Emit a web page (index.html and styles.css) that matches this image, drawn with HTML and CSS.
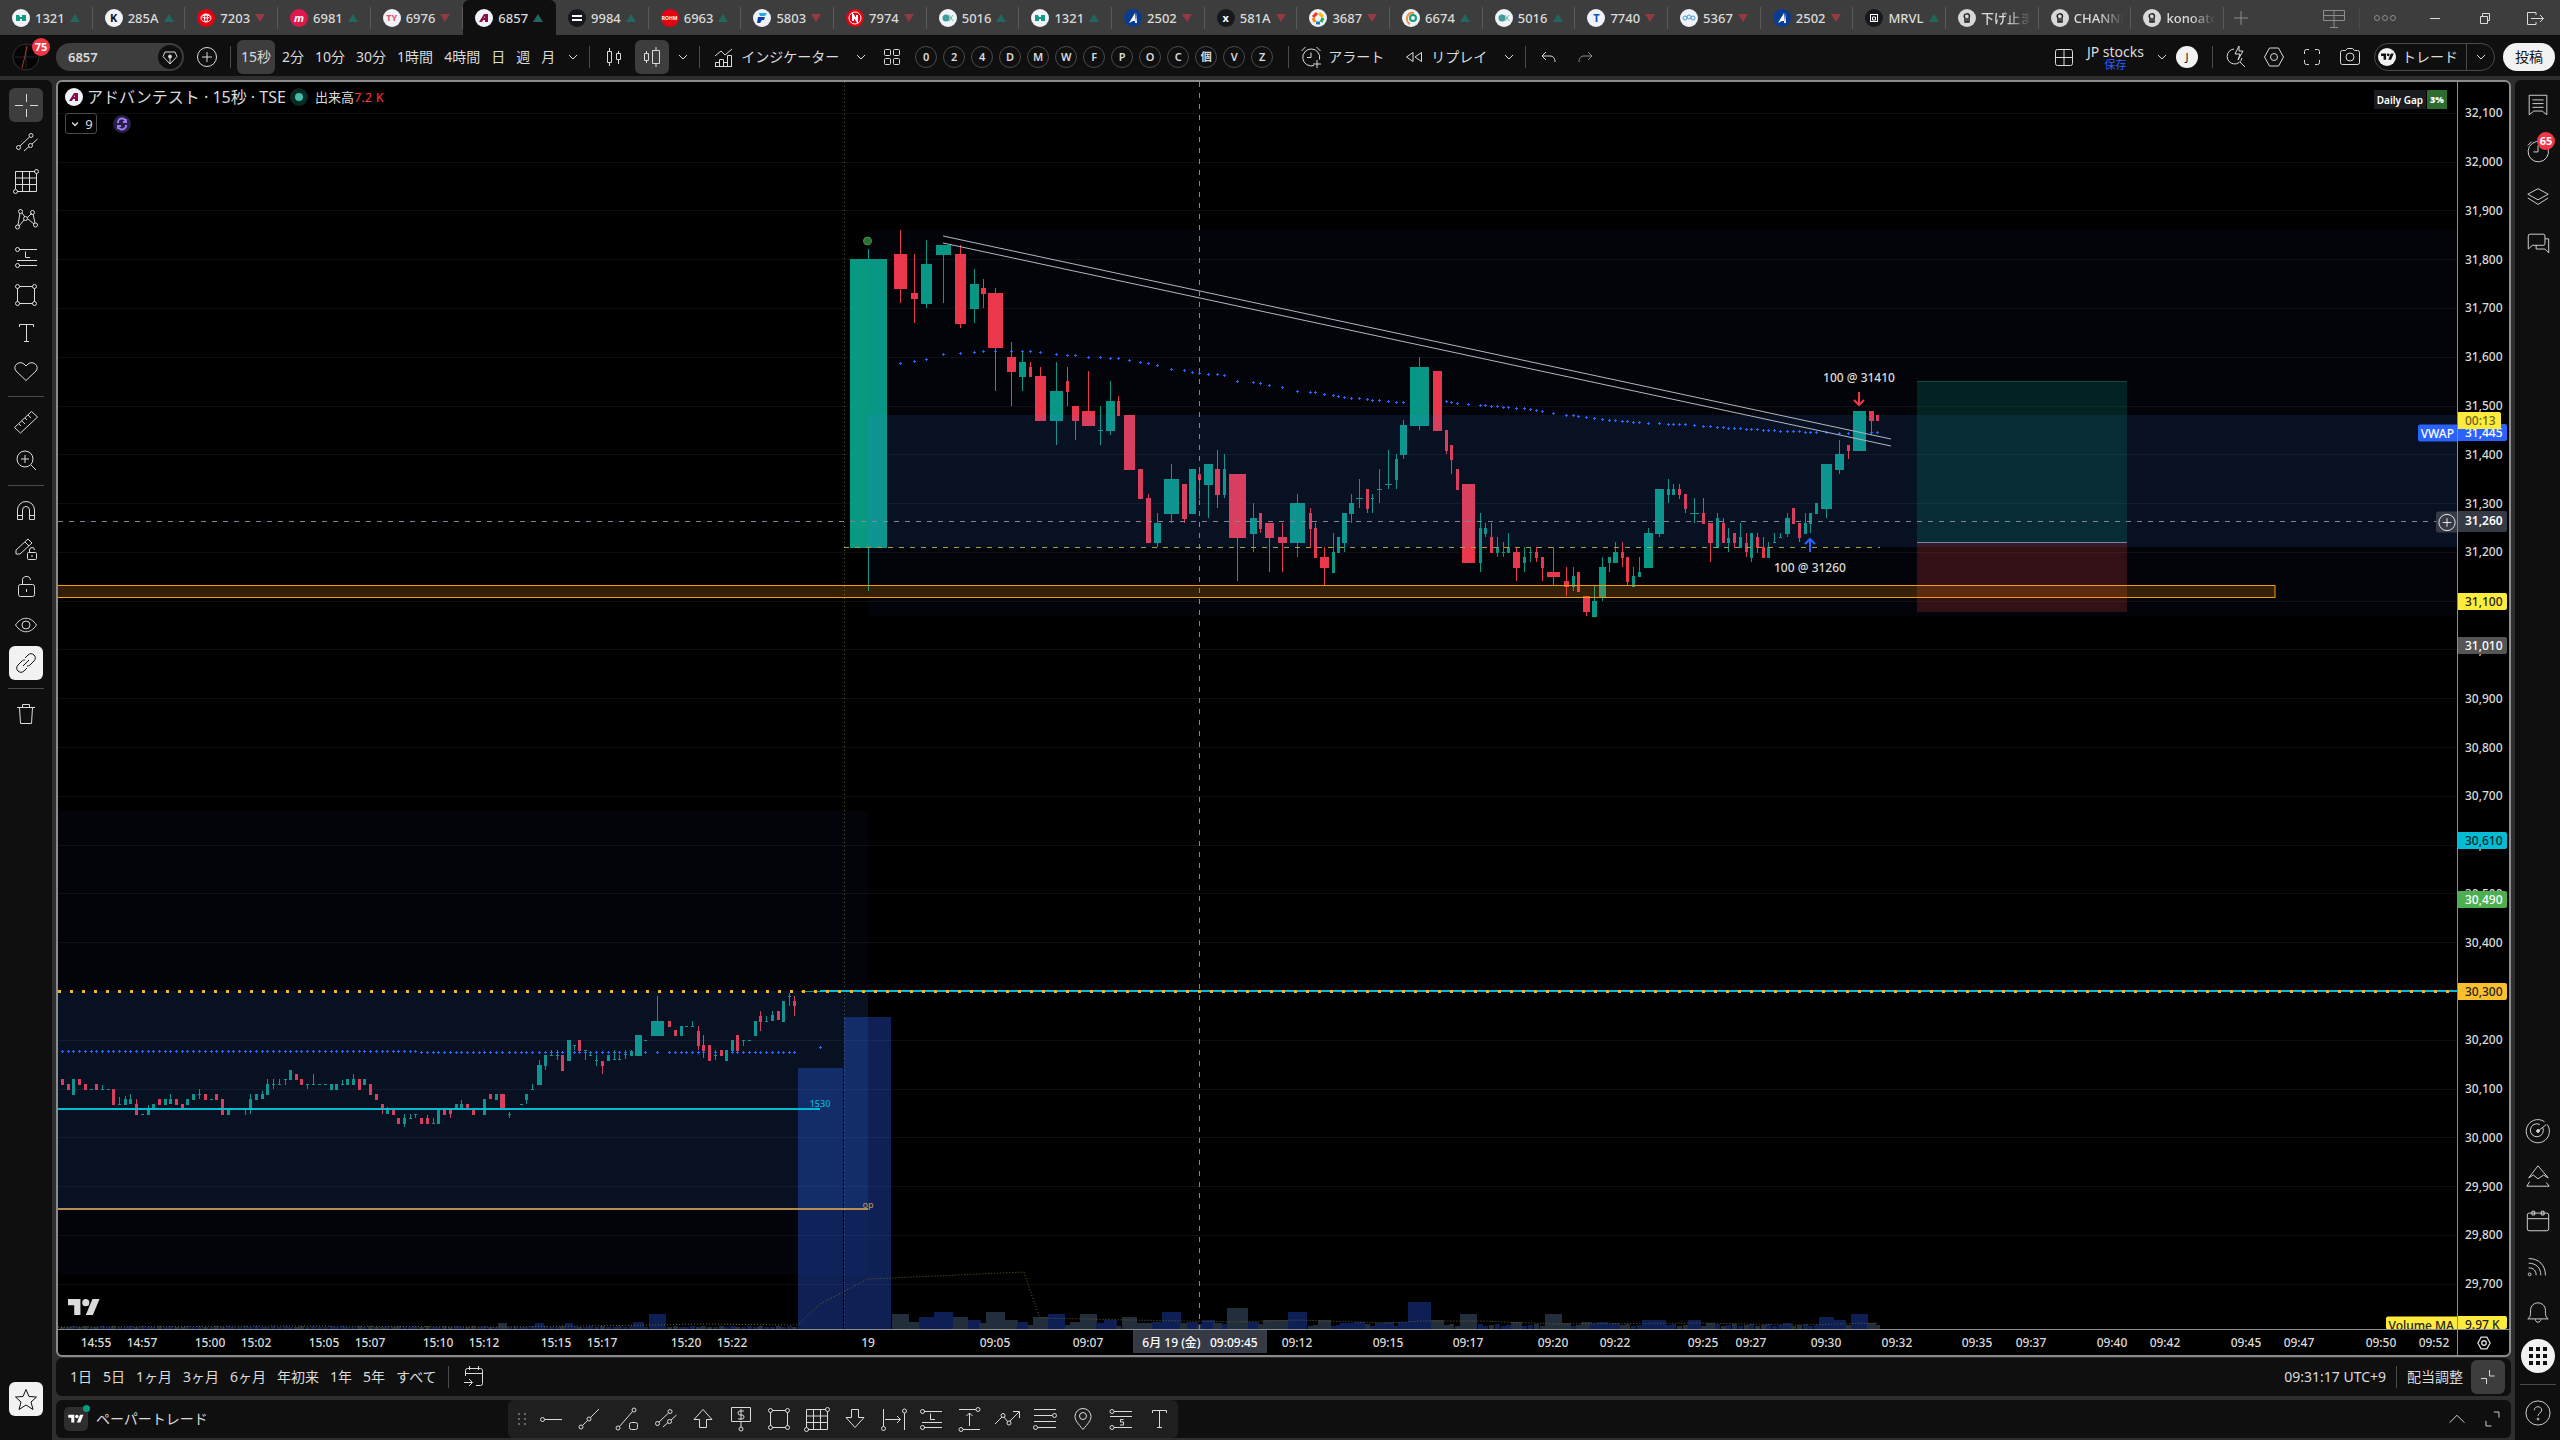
FILE: index.html
```html
<!DOCTYPE html>
<html lang="ja">
<head>
  <meta charset="UTF-8">
  <title>6857 アドバンテスト</title>
  <meta name="viewport" content="width=device-width, initial-scale=1.0">
  <link rel="stylesheet" href="styles.css">
</head>
<body>

<svg class="sprite" aria-hidden="true">
  <symbol id="i-down" viewBox="0 0 28 28"><path d="M10 12l4 4 4-4"/></symbol>
  <symbol id="i-up" viewBox="0 0 28 28"><path d="M6 18l8-8 8 8"/></symbol>
  <symbol id="i-plus" viewBox="0 0 28 28"><path d="M14 7v14M7 14h14"/></symbol>
  <symbol id="i-pluscircle" viewBox="0 0 28 28"><circle cx="14" cy="14" r="9.500"/><path d="M14 9v10M9 14h10"/></symbol>
  <symbol id="i-monitor" viewBox="0 0 28 28"><path d="M3.500 6.500h21v10h-21zM14 6v18M3.500 11.500h21M10 23.500h8"/></symbol>
  <symbol id="i-dots" viewBox="0 0 28 28"><circle cx="6" cy="14" r="2.500"/><circle cx="14" cy="14" r="2.500"/><circle cx="22" cy="14" r="2.500"/></symbol>
  <symbol id="i-min" viewBox="0 0 28 28"><path d="M9 14.500h10"/></symbol>
  <symbol id="i-restore" viewBox="0 0 28 28"><path d="M9.500 12.500h7v7h-7zM11.500 12V9.500h7v7H17"/></symbol>
  <symbol id="i-exit" viewBox="0 0 28 28"><path d="M15 11V8.500H6.500v12H15V18M10 14.500h12M19 11l3.500 3.500L19 18"/></symbol>
  <symbol id="i-gem" viewBox="0 0 28 28"><path d="M14 21l-7-7.500L9 9h10l2 4.500zM14 20v-5"/><circle cx="14" cy="13.500" r="1.500" fill="currentColor"/></symbol>
  <symbol id="i-candles" viewBox="0 0 28 28"><path d="M7.500 8.500h4v11h-4zM9.500 5v3.500M9.500 19.500V23M16.500 10.500h4v6h-4zM18.500 8v2.500M18.500 16.500V21"/></symbol>
  <symbol id="i-volcandles" viewBox="0 0 28 28"><path d="M6.500 10.500h4v7h-4zM8.500 8v2.500M8.500 17.500V20M14.500 7.500h7v13h-7zM18 4v3.500M18 20.500V24"/></symbol>
  <symbol id="i-indicator" viewBox="0 0 28 28"><path d="M5.500 23.500v-4h4v4M9.500 23.500v-7h4v7M13.500 19.500h4v4M17.500 23.500v-11h4v11zM5 23.500h17M5 13l6-5 4 4 7-6"/></symbol>
  <symbol id="i-grid4" viewBox="0 0 28 28"><rect x="6.500" y="6.500" width="6" height="6" rx="1"/><rect x="15.500" y="6.500" width="6" height="6" rx="1"/><rect x="6.500" y="15.500" width="6" height="6" rx="1"/><rect x="15.500" y="15.500" width="6" height="6" rx="1"/></symbol>
  <symbol id="i-alarm" viewBox="0 0 28 28"><path d="M17 22.500a8.500 8.500 0 1 1 5.500-6M14 9.500v5h-4M4.500 8l4-4M23.500 8l-4-4M20 17v8M16 21h8"/></symbol>
  <symbol id="i-replay" viewBox="0 0 28 28"><path d="M13 9.500v9L6.500 14zM21.500 9.500v9L15 14z"/></symbol>
  <symbol id="i-undo" viewBox="0 0 28 28"><path d="M12 9l-4 4 4 4M8 13h8c3 0 5 2 5 6"/></symbol>
  <symbol id="i-redo" viewBox="0 0 28 28"><path d="M16 9l4 4-4 4M20 13h-8c-3 0-5 2-5 6"/></symbol>
  <symbol id="i-layout" viewBox="0 0 28 28"><rect x="5.500" y="6.500" width="17" height="16" rx="2"/><path d="M14 6.500v16M14 14.500h8.500M5.500 14.500H14" /></symbol>
  <symbol id="i-quick" viewBox="0 0 28 28"><path d="M12 6a7.500 7.500 0 1 0 8 9M18 19l5 5M17 3l-4 8h5l-2 6 5-9h-4z"/></symbol>
  <symbol id="i-hex" viewBox="0 0 28 28"><path d="M9.500 5h9l5 9-5 9h-9l-5-9z"/><circle cx="14" cy="14" r="3.500"/></symbol>
  <symbol id="i-full" viewBox="0 0 28 28"><path d="M6.500 11V8.500a2 2 0 0 1 2-2H11M17 6.500h2.500a2 2 0 0 1 2 2V11M21.500 17v2.500a2 2 0 0 1-2 2H17M11 21.500H8.500a2 2 0 0 1-2-2V17"/></symbol>
  <symbol id="i-camera" viewBox="0 0 28 28"><path d="M4.500 9.500a2 2 0 0 1 2-2h3l2-2h5l2 2h3a2 2 0 0 1 2 2v10a2 2 0 0 1-2 2h-15a2 2 0 0 1-2-2z"/><circle cx="14" cy="14" r="4"/></symbol>
  <symbol id="i-cross" viewBox="0 0 28 28"><path d="M14.500 3v8M14.500 18v8M3 14.500h8M18 14.500h8"/></symbol>
  <symbol id="i-trend2" viewBox="0 0 28 28"><path d="M8 17l9.500-9M12 22l5-4.500M20 15l5.500-5"/><circle cx="6.500" cy="18.500" r="2"/><circle cx="19" cy="6.500" r="2"/><circle cx="18.500" cy="16.500" r="2"/></symbol>
  <symbol id="i-fib" viewBox="0 0 28 28"><path d="M3.500 22V4.500H23M5 24.500h19.500V6.500M3.500 11h21M3.500 17.500h21M10.500 4.500v20M17.500 4.500v20"/><circle cx="24.500" cy="4.500" r="2"/><circle cx="3.500" cy="24.500" r="2"/></symbol>
  <symbol id="i-pattern" viewBox="0 0 28 28"><path d="M6 20L8 8M10 8l3 4M15 13l5-5M21 9l2 9M7 21l5-6M16 14l6 5"/><circle cx="5.500" cy="22" r="2"/><circle cx="8.500" cy="6.500" r="2"/><circle cx="13.500" cy="13.500" r="2"/><circle cx="20.500" cy="7.500" r="2"/><circle cx="23.500" cy="20" r="2"/></symbol>
  <symbol id="i-long" viewBox="0 0 28 28"><path d="M7 6.500h18M5 17.500h20M7 22.500h18M13.500 8.500v6H18"/><circle cx="5.500" cy="6.500" r="2"/><circle cx="5.500" cy="22.500" r="2"/></symbol>
  <symbol id="i-rect" viewBox="0 0 28 28"><path d="M7.500 5.500h13M7.500 22.500h13M5.500 7.500v13M22.500 7.500v13"/><circle cx="5.500" cy="5.500" r="2"/><circle cx="22.500" cy="5.500" r="2"/><circle cx="5.500" cy="22.500" r="2"/><circle cx="22.500" cy="22.500" r="2"/></symbol>
  <symbol id="i-text" viewBox="0 0 28 28"><path d="M7.500 8V5.500h14V8M14.500 5.500v17M12 22.500h5"/></symbol>
  <symbol id="i-heart" viewBox="0 0 28 28"><path d="M14 23.500L4 14c-4-5 3-11 8-7l2 2 2-2c5-4 12 2 8 7z"/></symbol>
  <symbol id="i-ruler" viewBox="0 0 28 28"><path d="M2.500 19.500l17-16 6 5.500-17 16zM7 16l2 2M10 13l3 3M13 10l2 2M16 7l3 3"/></symbol>
  <symbol id="i-zoom" viewBox="0 0 28 28"><circle cx="13" cy="13" r="8"/><path d="M13 9v8M9 13h8M19 19l5 5"/></symbol>
  <symbol id="i-magnet" viewBox="0 0 28 28"><path d="M5.500 22.500V13a8.500 8.500 0 0 1 17 0v9.500h-5V13a3.500 3.500 0 0 0-7 0v9.500zM5.500 18.500h5M17.500 18.500h5"/></symbol>
  <symbol id="i-pencil" viewBox="0 0 28 28"><path d="M4 19v-4L16 4l4 4L8 19zM13 7l4 4"/><rect x="15.500" y="17.500" width="9" height="7" rx="1"/><path d="M17.500 17v-2a2.500 2.500 0 0 1 5 0M20 20v2"/></symbol>
  <symbol id="i-lock" viewBox="0 0 28 28"><rect x="6.500" y="11.500" width="16" height="12" rx="2"/><path d="M10.500 11V8a4 4 0 0 1 8-1M14.500 16v3" /></symbol>
  <symbol id="i-eye" viewBox="0 0 28 28"><path d="M3.500 14c6-9 15-9 21 0-6 9-15 9-21 0z"/><circle cx="14" cy="14" r="4"/></symbol>
  <symbol id="i-link" viewBox="0 0 28 28"><path d="M13 9l3-3c4-4 10 2 6 6l-4 4c-1 1-2 1-3 1M15 19l-3 3c-4 4-10-2-6-6l4-4c1-1 2-1 3-1M11 17l6-6"/></symbol>
  <symbol id="i-trash" viewBox="0 0 28 28"><path d="M5 7.500h18M7.500 7.500l1 16h11l1-16M10.500 7V4.500h7V7"/></symbol>
  <symbol id="i-star" viewBox="0 0 28 28"><path d="M14 4.500l3 7 7.500.5-5.500 5 2 7.500-7-4.500-7 4.500 2-7.500-5.500-5 7.500-.5z"/></symbol>
  <symbol id="i-list" viewBox="0 0 28 28"><path d="M4.500 3.500h19v21l-5-4h-9l-5 4zM8 8.500h12M8 12.500h12M8 16.500h12"/></symbol>
  <symbol id="i-clock" viewBox="0 0 28 28"><path d="M25 12a11 11 0 1 1-8-8M14 8v7H9M3 8l4-4"/></symbol>
  <symbol id="i-layers" viewBox="0 0 28 28"><path d="M14 5l11 6-11 6-11-6zM3 15l11 7 11-7"/></symbol>
  <symbol id="i-chat" viewBox="0 0 28 28"><path d="M5.500 4.500h14a2 2 0 0 1 2 2v8a2 2 0 0 1-2 2H8l-4.500 4v-14a2 2 0 0 1 2-2zM21.500 9.500h4v15l-4-4H12v-4"/></symbol>
  <symbol id="i-radar" viewBox="0 0 28 28"><path d="M24 7a12.500 12.500 0 1 1-3-3M19 10a7 7 0 1 1-3-3M14 14l9-7"/><circle cx="14" cy="14" r="1.500" fill="currentColor"/></symbol>
  <symbol id="i-pyramid" viewBox="0 0 28 28"><path d="M14 3l11 13-5-3-6 4-5-4-5 3zM2 25h24l-3-4M5 20l-3 5"/></symbol>
  <symbol id="i-calendar" viewBox="0 0 28 28"><rect x="2.500" y="5.500" width="23" height="19" rx="2"/><path d="M3 11.500h22M7.500 3.500h3v4h-3zM17.500 3.500h3v4h-3z"/></symbol>
  <symbol id="i-rss" viewBox="0 0 28 28"><circle cx="5" cy="23" r="1.500"/><path d="M4 16c5 0 8 3 8 8M4 11c8 0 13 5 13 13M4 6c11 0 18 7 18 18"/></symbol>
  <symbol id="i-bell" viewBox="0 0 28 28"><path d="M3 22.500c3-2 3-4 3-9 0-11 16-11 16 0 0 5 0 7 3 9zM11 23c0 4 6 4 6 0"/></symbol>
  <symbol id="i-help" viewBox="0 0 28 28"><circle cx="14" cy="14" r="13"/><path d="M10 11c0-5 8-5 8 0 0 3-4 3-4 6"/><circle cx="14" cy="20.500" r="1"/></symbol>
  <symbol id="i-goto" viewBox="0 0 28 28"><path d="M5.500 13V7.500a2 2 0 0 1 2-2h13a2 2 0 0 1 2 2v13a2 2 0 0 1-2 2H16M5.500 10.500h17M9.500 3v4M18.500 3v4M4 19.500h8M9 16l3.500 3.500L9 23"/></symbol>
  <symbol id="i-collapse" viewBox="0 0 28 28"><path d="M15.500 7v6h5M7 15.500h5.500V21"/></symbol>
  <symbol id="i-expand" viewBox="0 0 28 28"><path d="M16 6.500h5.500v6M7.500 16v5.500h6"/></symbol>
  <symbol id="i-drag" viewBox="0 0 28 28"><path class="drag" d="M10 9h2M16 9h2M10 14h2M16 14h2M10 19h2M16 19h2"/></symbol>
  <symbol id="i-hray" viewBox="0 0 28 28"><circle cx="5.500" cy="14.500" r="2"/><path d="M8 14.500h17"/></symbol>
  <symbol id="i-trend" viewBox="0 0 28 28"><circle cx="6" cy="22" r="2"/><circle cx="14" cy="14" r="2"/><path d="M7.500 20.500l5-5M15.500 12.500L24 4"/></symbol>
  <symbol id="i-trendlock" viewBox="0 0 28 28"><circle cx="5" cy="23" r="2"/><circle cx="21" cy="5" r="2"/><path d="M6.500 21.500L19.500 6.500"/><rect x="16.500" y="17.500" width="8" height="7" rx="2"/></symbol>
  <symbol id="i-arrowup" viewBox="0 0 28 28"><path d="M14 4.500l9 10h-5.500v8h-7v-8H5z"/></symbol>
  <symbol id="i-arrowdown" viewBox="0 0 28 28"><path d="M14 22.500l9-10h-5.500v-8h-7v8H5z"/></symbol>
  <symbol id="i-price" viewBox="0 0 28 28"><path d="M4.500 2.500h19v14h-19zM14 17v5M17 6h-4a1.500 1.500 0 0 0 0 4h2a1.500 1.500 0 0 1 0 4h-4M14 4v11"/><circle cx="14" cy="24" r="2"/></symbol>
  <symbol id="i-daterange" viewBox="0 0 28 28"><path d="M4.500 4v17M25.500 8v17M6 14.500h15M18 11l3.500 3.500L18 18"/><circle cx="4.500" cy="23.500" r="2"/><circle cx="25.500" cy="6" r="2"/></symbol>
  <symbol id="i-pricerange" viewBox="0 0 28 28"><path d="M4 4.500h17M8 24.500h17M14.500 21V8M11.500 11l3-3 3 3"/><circle cx="23" cy="4.500" r="2"/><circle cx="6" cy="24.500" r="2"/></symbol>
  <symbol id="i-zig" viewBox="0 0 28 28"><path d="M2 19l7-7M11 12l4 5M17 16l9-9M20 6.500h6.500V13"/><circle cx="10" cy="10.500" r="2"/><circle cx="16" cy="18" r="2"/></symbol>
  <symbol id="i-channel" viewBox="0 0 28 28"><path d="M3 4.500h22M3 10.500h18M3 16.500h22M7 22.500h18"/><circle cx="23.500" cy="10.500" r="2"/><circle cx="4.500" cy="22.500" r="2"/></symbol>
  <symbol id="i-pin" viewBox="0 0 28 28"><path d="M14 24.500c-5-6-8-9-8-13a8 8 0 0 1 16 0c0 4-3 7-8 13z"/><circle cx="14" cy="11" r="3.500"/></symbol>
  <symbol id="i-short" viewBox="0 0 28 28"><path d="M7 6.500h18M3 11.500h22M7 22.500h18M16.500 14.500h-3v2.500h3v3h-3.500"/><circle cx="5" cy="6.500" r="2"/><circle cx="5" cy="22.500" r="2"/></symbol>
  <symbol id="l-tv" viewBox="0 0 36 28"><path fill="currentColor" stroke="none" d="M14 22H7V11H0V4h14zM28 22h-8l7.500-18h8z"/><circle cx="20" cy="8" r="4" fill="currentColor" stroke="none"/></symbol>
  <symbol id="l-lamp" viewBox="0 0 18 18"><path fill="none" stroke="#222" stroke-width="1.500" d="M7 13V9C3 4 14 3 11 9v4zM9 9v4"/></symbol>
  <symbol id="l-a" viewBox="0 0 18 18"><path fill="currentColor" stroke="none" d="M4 13l5-8h4v8h-3v-2H8l-1 2zM9 9h1V7z"/></symbol>
  <symbol id="l-bars" viewBox="0 0 18 18"><path fill="currentColor" stroke="none" d="M4 6h10v2H4zM4 10h10v2H4z"/></symbol>
  <symbol id="l-h" viewBox="0 0 18 18"><path fill="currentColor" stroke="none" d="M4 6h3l1 2h2V6h4v6h-4v-2H8v2H4z"/></symbol>
  <symbol id="l-toyota" viewBox="0 0 18 18"><g fill="none" stroke="#fff"><ellipse cx="9" cy="9" rx="5" ry="4"/><ellipse cx="9" cy="7.500" rx="4" ry="1.500"/><ellipse cx="9" cy="9" rx="1.500" ry="4"/></g></symbol>
  <symbol id="l-nin" viewBox="0 0 18 18"><circle cx="9" cy="9" r="6" fill="none" stroke="#fff"/><path fill="none" stroke="#fff" stroke-width="2" d="M7 12V6l4 6V6"/></symbol>
  <symbol id="l-f" viewBox="0 0 18 18"><path fill="#1fa9e8" stroke="none" d="M6 4h8l-2 3H7z"/><path fill="#0b3fb0" stroke="none" d="M5 8h7l-1 3H9l-2 3H4z"/></symbol>
  <symbol id="l-dots" viewBox="0 0 18 18"><circle cx="7" cy="9" r="3.500" fill="#3f9c9a" stroke="none"/><path stroke="#6cc0a0" fill="none" d="M10 6l4 6M14 6l-4 6"/></symbol>
  <symbol id="l-sail" viewBox="0 0 18 18"><path fill="#fff" stroke="none" d="M5 14l6-10v8H9zM12 3l1 11h-2z"/></symbol>
  <symbol id="l-star" viewBox="0 0 18 18"><g fill="none" stroke-width="3"><path stroke="#e33" d="M4 8l4-4"/><path stroke="#fb0" d="M10 4l4 4"/><path stroke="#2a5" d="M14 9l-2 4"/><path stroke="#27c" d="M11 14H7"/><path stroke="#f80" d="M6 13L4 9"/></g></symbol>
  <symbol id="l-gs" viewBox="0 0 18 18"><path fill="none" stroke="#f0913a" stroke-width="2" d="M12 4C4 2 3 13 8 15"/><circle cx="11" cy="9" r="3" fill="none" stroke="#159c7a" stroke-width="2"/></symbol>
  <symbol id="l-ring" viewBox="0 0 18 18"><g fill="none" stroke="#4b9bd8"><circle cx="5" cy="9" r="2"/><circle cx="9" cy="8" r="2"/><circle cx="13" cy="9" r="2"/></g></symbol>
  <symbol id="l-mrvl" viewBox="0 0 18 18"><path fill="none" stroke="#fff" d="M5.500 5v8M12.500 5v8M5 5.500h8M5 12.500h8M7.500 8h3v3h-3z"/></symbol>
</svg>

<nav class="tabs">
  <div class="tab-list">
    <a href="#" class="tab"><span class="logo green"><svg><use href="#l-h"/></svg></span>1321<i class="up"></i></a>
    <a href="#" class="tab"><span class="logo">K</span>285A<i class="up"></i></a>
    <a href="#" class="tab"><span class="logo red"><svg><use href="#l-toyota"/></svg></span>7203<i class="dn"></i></a>
    <a href="#" class="tab"><span class="logo pink">m</span>6981<i class="up"></i></a>
    <a href="#" class="tab"><span class="logo ty">TY</span>6976<i class="dn"></i></a>
    <a href="#" class="tab active"><span class="logo wine"><svg><use href="#l-a"/></svg></span>6857<i class="up"></i></a>
    <a href="#" class="tab"><span class="logo dark"><svg><use href="#l-bars"/></svg></span>9984<i class="up"></i></a>
    <a href="#" class="tab"><span class="logo red tiny">ROHM</span>6963<i class="up"></i></a>
    <a href="#" class="tab"><span class="logo"><svg><use href="#l-f"/></svg></span>5803<i class="dn"></i></a>
    <a href="#" class="tab"><span class="logo red"><svg><use href="#l-nin"/></svg></span>7974<i class="dn"></i></a>
    <a href="#" class="tab"><span class="logo"><svg><use href="#l-dots"/></svg></span>5016<i class="up"></i></a>
    <a href="#" class="tab"><span class="logo green"><svg><use href="#l-h"/></svg></span>1321<i class="up"></i></a>
    <a href="#" class="tab"><span class="logo navy"><svg><use href="#l-sail"/></svg></span>2502<i class="dn"></i></a>
    <a href="#" class="tab"><span class="logo dark">x</span>581A<i class="dn"></i></a>
    <a href="#" class="tab"><span class="logo"><svg><use href="#l-star"/></svg></span>3687<i class="dn"></i></a>
    <a href="#" class="tab"><span class="logo"><svg><use href="#l-gs"/></svg></span>6674<i class="up"></i></a>
    <a href="#" class="tab"><span class="logo"><svg><use href="#l-dots"/></svg></span>5016<i class="up"></i></a>
    <a href="#" class="tab"><span class="logo blue">T</span>7740<i class="dn"></i></a>
    <a href="#" class="tab"><span class="logo"><svg><use href="#l-ring"/></svg></span>5367<i class="dn"></i></a>
    <a href="#" class="tab"><span class="logo navy"><svg><use href="#l-sail"/></svg></span>2502<i class="dn"></i></a>
    <a href="#" class="tab"><span class="logo dark"><svg><use href="#l-mrvl"/></svg></span>MRVL<i class="up"></i></a>
    <a href="#" class="tab"><span class="logo grey"><svg><use href="#l-lamp"/></svg></span><span class="fade">下げ止ま</span></a>
    <a href="#" class="tab"><span class="logo grey"><svg><use href="#l-lamp"/></svg></span><span class="fade">CHANNE</span></a>
    <a href="#" class="tab"><span class="logo grey"><svg><use href="#l-lamp"/></svg></span><span class="fade">konoato</span></a>
  </div>
  <div class="window-tools">
    <button class="muted w35" aria-label="新しいタブ"><svg class="ico"><use href="#i-plus"/></svg></button>
    <button class="muted monitor" aria-label="モニター"><svg class="ico"><use href="#i-monitor"/></svg></button>
    <span class="sep"></span>
    <button class="muted w50" aria-label="メニュー"><svg class="ico"><use href="#i-dots"/></svg></button>
    <button class="w50" aria-label="最小化"><svg class="ico"><use href="#i-min"/></svg></button>
    <button class="w50" aria-label="元に戻す"><svg class="ico"><use href="#i-restore"/></svg></button>
    <button class="w50" aria-label="終了"><svg class="ico"><use href="#i-exit"/></svg></button>
  </div>
</nav>

<header class="toolbar">
  <button class="user" aria-label="ユーザー"><svg class="avatar" viewBox="0 0 28 28"><circle cx="14" cy="14" r="13" fill="#050505" stroke="#333"/><path d="M3 14h22M14 2v24" stroke="#1d2433"/><path d="M10 25l3-12 2-10" stroke="#a04020" fill="none"/></svg><b class="badge">75</b></button>
  <div class="search"><input type="text" value="6857" aria-label="シンボル検索"><span class="gem"><svg class="ico"><use href="#i-gem"/></svg></span></div>
  <button class="w35 add" aria-label="比較"><svg class="ico"><use href="#i-pluscircle"/></svg></button>
  <span class="sep"></span>
  <div class="intervals">
    <button class="on">15秒</button><button>2分</button><button>10分</button><button>30分</button><button>1時間</button><button>4時間</button><button>日</button><button>週</button><button>月</button>
  </div>
  <button class="chev" aria-label="時間足"><svg class="ico"><use href="#i-down"/></svg></button>
  <span class="sep"></span>
  <button class="w35" aria-label="ローソク足"><svg class="ico"><use href="#i-candles"/></svg></button>
  <button class="w35 on" aria-label="出来高ローソク足"><svg class="ico"><use href="#i-volcandles"/></svg></button>
  <button class="chev" aria-label="チャートタイプ"><svg class="ico"><use href="#i-down"/></svg></button>
  <span class="sep"></span>
  <button class="labelled"><svg class="ico"><use href="#i-indicator"/></svg>インジケーター</button>
  <button class="chev wide" aria-label="お気に入り"><svg class="ico"><use href="#i-down"/></svg></button>
  <button class="w35" aria-label="テンプレート"><svg class="ico"><use href="#i-grid4"/></svg></button>
  <div class="rounds"><button>0</button><button>2</button><button>4</button><button>D</button><button>M</button><button>W</button><button>F</button><button>P</button><button>O</button><button>C</button><button>個</button><button>V</button><button>Z</button></div>
  <span class="sep far"></span>
  <button class="labelled"><svg class="ico"><use href="#i-alarm"/></svg>アラート</button>
  <button class="labelled replay"><svg class="ico"><use href="#i-replay"/></svg>リプレイ</button>
  <button class="chev wide" aria-label="リプレイ設定"><svg class="ico"><use href="#i-down"/></svg></button>
  <span class="sep tight"></span>
  <button class="w38" aria-label="元に戻す"><svg class="ico"><use href="#i-undo"/></svg></button>
  <button class="w38 muted" aria-label="やり直し"><svg class="ico"><use href="#i-redo"/></svg></button>

  <div class="right">
    <button class="w38" aria-label="レイアウト"><svg class="ico"><use href="#i-layout"/></svg></button>
    <button class="saved">JP stocks<small>保存</small></button>
    <button class="chev" aria-label="レイアウト一覧"><svg class="ico"><use href="#i-down"/></svg></button>
    <button class="jay">J</button>
    <span class="sep"></span>
    <button class="w38" aria-label="クイック検索"><svg class="ico"><use href="#i-quick"/></svg></button>
    <button class="w38" aria-label="設定"><svg class="ico"><use href="#i-hex"/></svg></button>
    <button class="w38" aria-label="全画面"><svg class="ico"><use href="#i-full"/></svg></button>
    <button class="w38" aria-label="スナップショット"><svg class="ico"><use href="#i-camera"/></svg></button>
    <div class="trade"><button><span class="tv"><svg><use href="#l-tv"/></svg></span>トレード</button><button class="drop" aria-label="トレードメニュー"><svg class="ico"><use href="#i-down"/></svg></button></div>
    <button class="post">投稿</button>
  </div>
</header>

<div class="workspace">
  <aside class="tools">
    <button class="on" aria-label="十字"><svg class="ico"><use href="#i-cross"/></svg></button>
    <button aria-label="トレンドライン"><svg class="ico"><use href="#i-trend2"/></svg></button>
    <button aria-label="フィボナッチ"><svg class="ico"><use href="#i-fib"/></svg></button>
    <button aria-label="パターン"><svg class="ico"><use href="#i-pattern"/></svg></button>
    <button aria-label="ポジション"><svg class="ico"><use href="#i-long"/></svg></button>
    <button aria-label="図形"><svg class="ico"><use href="#i-rect"/></svg></button>
    <button aria-label="テキスト"><svg class="ico"><use href="#i-text"/></svg></button>
    <button aria-label="アイコン"><svg class="ico"><use href="#i-heart"/></svg></button>
    <hr>
    <button aria-label="ものさし"><svg class="ico"><use href="#i-ruler"/></svg></button>
    <button aria-label="拡大"><svg class="ico"><use href="#i-zoom"/></svg></button>
    <hr>
    <button aria-label="マグネット"><svg class="ico"><use href="#i-magnet"/></svg></button>
    <button aria-label="描画モード"><svg class="ico"><use href="#i-pencil"/></svg></button>
    <button aria-label="ロック"><svg class="ico"><use href="#i-lock"/></svg></button>
    <button aria-label="表示"><svg class="ico"><use href="#i-eye"/></svg></button>
    <button class="white" aria-label="同期"><svg class="ico"><use href="#i-link"/></svg></button>
    <hr>
    <button aria-label="削除"><svg class="ico"><use href="#i-trash"/></svg></button>
    <button class="white last" aria-label="お気に入りツールバー"><svg class="ico"><use href="#i-star"/></svg></button>
  </aside>

  <main class="center">
    <section class="chart">
      <div class="pane">
        <svg id="plot" viewBox="58 82 2399 1247" preserveAspectRatio="none"></svg>
        <div class="legend">
          <div class="symbol"><span class="logo wine"><svg><use href="#l-a"/></svg></span><h1>アドバンテスト · 15秒 · TSE</h1><span class="live"></span><span class="vol">出来高<em>7.2 K</em></span></div>
          <div class="studies"><button><svg class="ico"><use href="#i-down"/></svg>9</button><span class="sync"><svg viewBox="0 0 18 18"><path d="M5 8a4 4 0 0 1 8-1M13 10a4 4 0 0 1-8 1M13 4v3h-3M5 14v-3h3" fill="none" stroke="#9f7bf0" stroke-width="2"/></svg></span></div>
        </div>
        <div class="gap-table"><span>Daily Gap</span><b>3%</b></div>
        <svg class="mark"><use href="#l-tv"/></svg>
        <div id="notes"></div>
      </div>
      <div class="price-axis" id="prices"></div>
      <div class="time-axis" id="times"></div>
      <button class="axis-gear" aria-label="軸の設定"><svg class="ico"><use href="#i-hex"/></svg></button>
    </section>

    <section class="ranges">
      <button>1日</button><button>5日</button><button>1ヶ月</button><button>3ヶ月</button><button>6ヶ月</button><button>年初来</button><button>1年</button><button>5年</button><button>すべて</button>
      <span class="sep"></span>
      <button aria-label="日付へ移動"><svg class="ico"><use href="#i-goto"/></svg></button>
      <div class="right"><button>09:31:17 UTC+9</button><span class="sep"></span><button>配当調整</button><button class="on" aria-label="縮小"><svg class="ico"><use href="#i-collapse"/></svg></button></div>
    </section>

    <section class="bottom">
      <button class="paper"><span class="tvbox"><svg><use href="#l-tv"/></svg></span>ペーパートレード</button>
      <div class="palette">
        <span class="grip"><svg class="ico"><use href="#i-drag"/></svg></span>
        <button aria-label="水平レイ"><svg class="ico"><use href="#i-hray"/></svg></button>
        <button aria-label="レイ"><svg class="ico"><use href="#i-trend"/></svg></button>
        <button aria-label="情報ライン"><svg class="ico"><use href="#i-trendlock"/></svg></button>
        <button aria-label="平行チャネル"><svg class="ico"><use href="#i-trend2"/></svg></button>
        <button aria-label="上矢印"><svg class="ico"><use href="#i-arrowup"/></svg></button>
        <button aria-label="価格ラベル"><svg class="ico"><use href="#i-price"/></svg></button>
        <button aria-label="長方形"><svg class="ico"><use href="#i-rect"/></svg></button>
        <button aria-label="グリッド"><svg class="ico"><use href="#i-fib"/></svg></button>
        <button aria-label="下矢印"><svg class="ico"><use href="#i-arrowdown"/></svg></button>
        <button aria-label="日付範囲"><svg class="ico"><use href="#i-daterange"/></svg></button>
        <button aria-label="ロング"><svg class="ico"><use href="#i-long"/></svg></button>
        <button aria-label="価格範囲"><svg class="ico"><use href="#i-pricerange"/></svg></button>
        <button aria-label="パス"><svg class="ico"><use href="#i-zig"/></svg></button>
        <button aria-label="リトレースメント"><svg class="ico"><use href="#i-channel"/></svg></button>
        <button aria-label="ピン"><svg class="ico"><use href="#i-pin"/></svg></button>
        <button aria-label="ショート"><svg class="ico"><use href="#i-short"/></svg></button>
        <button aria-label="文字"><svg class="ico"><use href="#i-text"/></svg></button>
      </div>
      <div class="right"><button aria-label="開く"><svg class="ico"><use href="#i-up"/></svg></button><button aria-label="最大化"><svg class="ico"><use href="#i-expand"/></svg></button></div>
    </section>
  </main>

  <aside class="widgets">
    <button aria-label="ウォッチリスト"><svg class="ico"><use href="#i-list"/></svg></button>
    <button aria-label="アラート"><svg class="ico"><use href="#i-clock"/></svg><b class="badge">65</b></button>
    <button aria-label="オブジェクト"><svg class="ico"><use href="#i-layers"/></svg></button>
    <button aria-label="チャット"><svg class="ico"><use href="#i-chat"/></svg></button>
    <button class="first-low" aria-label="スクリーナー"><svg class="ico"><use href="#i-radar"/></svg></button>
    <button aria-label="Pine"><svg class="ico"><use href="#i-pyramid"/></svg></button>
    <button aria-label="カレンダー"><svg class="ico"><use href="#i-calendar"/></svg></button>
    <button aria-label="ニュース"><svg class="ico"><use href="#i-rss"/></svg></button>
    <button aria-label="通知"><svg class="ico"><use href="#i-bell"/></svg></button>
    <button aria-label="アプリ"><svg class="apps" viewBox="0 0 34 34"><circle cx="17" cy="17" r="17" fill="#f2f2f2"/><path stroke="#0f0f0f" stroke-width="4" stroke-dasharray="4 3" d="M8 10h18M8 17h18M8 24h18"/></svg></button>
    <hr>
    <button aria-label="ヘルプ"><svg class="ico"><use href="#i-help"/></svg></button>
  </aside>
</div>

<script src="chart.js"></script>
</body>
</html>
```

FILE: styles.css
```css
* { box-sizing: border-box; }
body {
  margin: 0;
  height: 100vh;
  display: flex;
  flex-direction: column;
  overflow: hidden;
  background: #2e2e2e;
  color: #dbdbdb;
  font: 14px/18px "Noto Sans", "Noto Sans CJK JP", sans-serif;
}
button {
  display: flex;
  align-items: center;
  justify-content: center;
  flex: none;
  padding: 0;
  border: 0;
  background: none;
  color: inherit;
  font: inherit;
  white-space: nowrap;
}
a { color: inherit; text-decoration: none; }
svg { display: block; }
.sprite { position: absolute; width: 0; height: 0; }
.ico {
  width: 28px;
  height: 28px;
  flex: none;
  fill: none;
  stroke: currentColor;
}
.drag { stroke: #666; stroke-width: 2; }
.muted { color: #8c8c8c; }
.on { background: #3d3d3d; border-radius: 6px; }
.white { background: #f2f2f2; color: #0f0f0f; border-radius: 6px; }
.sep { width: 1px; height: 22px; background: #4a4a4a; flex: none; }
.w35 { width: 34px; }
.w38 { width: 38px; }
.w50 { width: 50px; }
.right { display: flex; align-items: center; margin-left: auto; }
.badge {
  position: absolute;
  min-width: 18px;
  height: 18px;
  border-radius: 9px;
  background: #f23645;
  color: #fff;
  font-size: 11px;
  line-height: 18px;
  text-align: center;
}

/* tabs */
.tabs { display: flex; height: 35px; background: #3d3d3d; flex: none; }
.tab-list { display: flex; flex: 1; min-width: 0; }
.tab {
  position: relative;
  display: flex;
  align-items: center;
  flex: 1 1 0;
  min-width: 0;
  padding-left: 12px;
  font-size: 13px;
  font-weight: 500;
}
.tab::after {
  content: "";
  position: absolute;
  right: 0;
  top: 7px;
  height: 22px;
  width: 1px;
  background: #5a5a5a;
}
.tab.active { background: #0f0f0f; border-radius: 6px 6px 0 0; }
.tab.active::after { display: none; }
.logo {
  width: 18px;
  height: 18px;
  flex: none;
  margin-right: 5px;
  border-radius: 50%;
  background: #f0f3fa;
  color: #111;
  font-size: 11px;
  font-weight: 700;
  line-height: 18px;
  text-align: center;
}
.logo svg { width: 18px; height: 18px; }
.logo.green { color: #0f9a83; }
.logo.red { background: #e60012; color: #fff; }
.logo.pink { background: #e0174b; color: #fff; font-style: italic; }
.logo.ty { color: #e25563; font-size: 9px; }
.logo.wine { color: #8c0a48; }
.logo.dark { background: #15181c; color: #fff; }
.logo.tiny { font-size: 5px; }
.logo.navy { background: #0a3d91; }
.logo.blue { color: #0b57b5; }
.logo.grey { background: #d8d8d8; }
.tab i {
  margin-left: 5px;
  border: 5px solid transparent;
  border-top-width: 0;
  border-bottom: 8px solid #21695f;
}
.tab i.dn { border-width: 8px 5px 0; border-top-color: #963a42; }
.fade {
  width: 50px;
  overflow: hidden;
  white-space: nowrap;
  -webkit-mask-image: linear-gradient(90deg, #000 50%, transparent);
  mask-image: linear-gradient(90deg, #000 50%, transparent);
}
.window-tools { display: flex; align-items: center; width: 336px; }
.monitor { width: 50px; margin: 0 0 0 auto; }

/* toolbar */
.toolbar {
  display: flex;
  align-items: center;
  height: 41px;
  padding: 3px 5px 0 0;
  background: #0f0f0f;
  flex: none;
}
.toolbar > button, .intervals button, .toolbar .right > button { height: 34px; }
.user { position: relative; width: 52px; }
.avatar { width: 28px; height: 28px; }
.user .badge { left: 32px; top: -2px; }
.search {
  display: flex;
  align-items: center;
  width: 128px;
  height: 28px;
  margin-left: 4px;
  padding: 0 2px 0 12px;
  border-radius: 14px;
  background: #3d3d3d;
}
.search input {
  width: 90px;
  padding: 0;
  border: 0;
  background: none;
  color: #dbdbdb;
  font: 600 13px "Noto Sans", sans-serif;
}
.gem { width: 24px; height: 24px; border-radius: 50%; background: #0f0f0f; display: flex; align-items: center; justify-content: center; }
.add { margin: 0 6px; }
.intervals { display: flex; gap: 3px; margin-left: 6px; }
.intervals button { padding: 0 4px; }
.chev { width: 28px; }
.chev + .sep { margin: 0 7px 0 2px; }
.on + .chev + .sep { margin: 0 10px 0 2px; }
.w35 + .w35 { margin-left: 4px; }
.labelled { gap: 3px; }
.chev.wide { width: 28px; margin-left: 8px; }
.rounds { display: flex; gap: 6px; margin-left: 6px; }
.rounds button {
  width: 22px;
  height: 22px;
  border: 1px solid #4a4a4a;
  border-radius: 50%;
  font-size: 11px;
  font-weight: 600;
}
.sep.far { margin: 0 8px 0 15px; }
.replay { margin-left: 16px; }
.chev.wide + .tight.sep { margin: 0 3px 0 2px; }
.saved {
  flex-direction: column;
  margin-left: 4px;
  line-height: 14px;
}
.saved small { color: #2962ff; font-size: 11px; line-height: 11px; }
.saved + .chev { margin-left: 4px; }
.toolbar .right > .jay {
  width: 22px;
  height: 22px;
  margin-right: 14px;
  border-radius: 50%;
  background: #f2f2f2;
  color: #0f0f0f;
  font-size: 11px;
}
.right .jay + .sep { margin-right: 4px; }
.trade {
  display: flex;
  height: 28px;
  margin: 0 8px 0 5px;
  border: 1px solid #4a4a4a;
  border-radius: 14px;
}
.trade button { height: 26px; padding: 0 8px 0 3px; gap: 6px; }
.trade .drop { width: 28px; padding: 0; border-left: 1px solid #4a4a4a; }
.tv { width: 18px; height: 18px; border-radius: 50%; background: #f2f2f2; color: #0f0f0f; display: grid; place-items: center; }
.tv svg { width: 13px; height: 10px; }
.toolbar .right > .post { width: 52px; height: 28px; border-radius: 14px; background: #f2f2f2; color: #0f0f0f; }

/* body of the page */
.workspace { display: flex; flex: 1; min-height: 0; gap: 4px; padding-top: 4px; }
.tools, .widgets {
  display: flex;
  flex-direction: column;
  align-items: center;
  flex: none;
  background: #0f0f0f;
}
.tools { width: 52px; padding: 8px 0 24px; gap: 4px; border-top-right-radius: 6px; }
.tools button { width: 34px; height: 34px; }
.tools hr, .widgets hr { width: 36px; margin: 4px 0; border: 0; border-top: 1px solid #4a4a4a; }
.tools .last { margin-top: auto; }
.widgets { width: 45px; padding: 8px 0 10px; border-top-left-radius: 6px; }
.widgets button { position: relative; width: 45px; height: 34px; margin-bottom: 12px; }
.widgets .badge { left: 22px; top: -2px; }
.widgets .ico { width: 26px; height: 26px; }
.widgets .first-low { margin-top: auto; }
.widgets .first-low, .widgets .first-low ~ button { margin-bottom: 11px; }
.widgets button:last-child { margin-bottom: 0; }
.widgets hr { margin: 0 0 11px; }
.apps { width: 34px; height: 34px; }
.center { display: flex; flex-direction: column; flex: 1; min-width: 0; }

/* chart */
.chart {
  display: grid;
  grid-template-columns: 1fr 52px;
  grid-template-rows: 1fr 26px;
  flex: 1;
  min-height: 0;
  border: 2px solid #8c8c8c;
  border-radius: 6px;
  background: #000;
  overflow: hidden;
}
.pane { position: relative; min-width: 0; min-height: 0; }
#plot { position: absolute; width: 100%; height: 100%; }
.price-axis { position: relative; border-left: 1px solid #8c8c8c; font-size: 12px; font-weight: 500; }
.time-axis { position: relative; border-top: 1px solid #8c8c8c; font-size: 12px; font-weight: 500; }
.axis-gear { border-left: 1px solid #8c8c8c; border-top: 1px solid #8c8c8c; }
.axis-gear .ico { width: 18px; height: 18px; stroke-width: 2; }
.price-axis span {
  position: absolute;
  left: 0;
  width: 49px;
  height: 17px;
  margin-top: -9px;
  padding-left: 7px;
  border-radius: 0 2px 2px 0;
  line-height: 17px;
}
.price-axis .yellow { background: #ffeb3b; color: #222; }
.price-axis .timer { width: 43px; color: #6b6320; }
.price-axis .blue { background: #2962ff; color: #fff; }
.price-axis .slate { height: 21px; margin-top: -11px; line-height: 20px; background: #363a45; color: #fff; font-weight: 600; }
.price-axis .grey { background: #555; color: #fff; }
.price-axis .cyan { background: #00bcd4; color: #10282c; }
.price-axis .green { background: #4caf50; color: #fff; }
.price-axis .amber { background: #fbc02d; color: #222; }
.price-axis .ma { height: 13px; margin-top: -7px; overflow: hidden; }
.time-axis span { position: absolute; top: 4px; transform: translateX(-50%); white-space: nowrap; }
.time-axis .cursor {
  top: 0;
  height: 23px;
  width: 134px;
  background: #363a45;
  color: #fff;
  line-height: 26px;
  text-align: center;
  white-space: pre;
}
#notes span { position: absolute; transform: translate(-50%, -50%); font-size: 12px; font-weight: 500; white-space: nowrap; }
#notes .small { font-size: 9px; color: #00bcd4; }
#notes .open { color: #b98c4f; }
#notes .tag {
  transform: translateY(-50%);
  right: 0;
  height: 17px;
  padding: 0 3px;
  border-radius: 2px 0 0 2px;
  background: #2962ff;
  color: #fff;
  line-height: 17px;
}
#notes .ma { height: 13px; background: #ffeb3b; color: #222; overflow: hidden; }
#notes .add-alert { height: 21px; width: 21px; padding: 0; background: #363a45; display: flex; align-items: center; justify-content: center; }
#notes .add-alert .ico { width: 24px; height: 24px; }
.legend { position: relative; padding: 5px 7px; width: 400px; }
.symbol { display: flex; align-items: center; height: 20px; }
.symbol h1 { margin: 0; font-size: 16px; font-weight: 400; white-space: nowrap; }
.symbol .logo { margin-right: 4px; }
.live { width: 18px; height: 18px; margin: 0 7px 0 4px; border: 5px solid #0a2a25; border-radius: 50%; background: #42bda8; flex: none; }
.vol { font-size: 13px; white-space: nowrap; }
.vol em { color: #f23645; font-style: normal; }
.studies { display: flex; gap: 16px; align-items: center; margin-top: 6px; }
.studies button { width: 32px; height: 21px; border: 1px solid #4a4a4a; border-radius: 3px; font-size: 13px; }
.studies .ico { width: 20px; height: 20px; margin-left: -4px; stroke-width: 2; }
.sync { width: 18px; height: 18px; border-radius: 50%; background: #2a1f45; }
.gap-table {
  position: absolute;
  top: 8px;
  right: 10px;
  display: flex;
  gap: 1px;
  height: 19px;
  color: #fff;
  font-size: 10px;
  font-weight: 600;
  line-height: 20px;
}
.gap-table span { padding: 0 3px; background: #1b1c20; }
.gap-table b { width: 20px; background: #2e6b2e; text-align: center; font-size: 9px; }
.mark { position: absolute; left: 10px; bottom: 8px; width: 32px; height: 26px; color: #dbdbdb; }

/* under the chart */
.ranges, .bottom { display: flex; align-items: center; height: 38px; background: #0f0f0f; border-radius: 6px; flex: none; }
.ranges { margin-top: 1px; padding: 0 6px 0 14px; gap: 11px; }
.ranges .right { gap: 10px; }
.ranges .right .on { width: 34px; height: 34px; margin-left: -2px; }
.bottom { display: grid; grid-template-columns: 452px auto 1fr; margin: 4px 0 2px; }
.paper { justify-self: start; margin-left: 8px; gap: 8px; }
.tvbox { position: relative; width: 24px; height: 24px; border-radius: 5px; background: #2e2e2e; color: #fff; display: grid; place-items: center; }
.tvbox svg { width: 16px; height: 12px; }
.tvbox::after { content: ""; position: absolute; right: -2px; top: -2px; width: 7px; height: 7px; border-radius: 50%; background: #089981; }
.palette { display: flex; align-items: center; height: 38px; border-radius: 6px; background: #1f1f1f; }
.palette button { width: 38px; height: 38px; }
.grip { width: 24px; }
.bottom .right button { width: 35px; }
.bottom .right .ico { width: 26px; height: 26px; }
.bottom .right { padding-right: 2px; }
```

FILE: chart.js
```js
const NS = 'http://www.w3.org/2000/svg';
const plot = document.getElementById('plot');
const VIEW = { x: 58, y: 82, w: 2399, h: 1247 };
const UP = '#089981', DOWN = '#f23645';

function add(tag, attrs) {
  const el = document.createElementNS(NS, tag);
  for (const k in attrs) el.setAttribute(k, attrs[k]);
  plot.appendChild(el);
  return el;
}
function rect(x, y, w, h, fill) {
  return add('rect', { x, y, width: w, height: h, fill, 'shape-rendering': 'crispEdges' });
}
function line(x1, y1, x2, y2, stroke, width, dash) {
  return add('line', { x1, y1, x2, y2, stroke, 'stroke-width': width || 1, 'stroke-dasharray': dash || 'none' });
}
const yOf = price => 113.3 + (32100 - price) * 0.4879;
const pctX = x => (x - VIEW.x) / VIEW.w * 100 + '%';
const pctY = y => (y - VIEW.y) / VIEW.h * 100 + '%';

// x, width, high, top, bottom, low, up
const today = [
  [868,37,249,259,548,591,1],[900,13,230,254,289,303,0],[914,7,254,293,299,323,0],[926,11,240,264,304,308,1],
  [943,15,245,245,255,303,1],[960,11,245,254,324,328,0],[974,9,269,284,309,323,1],[983,5,279,288,294,308,0],
  [995,15,288,293,348,391,0],[1011,9,342,357,372,406,0],[1022,7,352,362,377,391,1],[1030,3,362,367,377,377,0],
  [1040,11,367,376,421,421,0],[1056,13,362,391,421,445,1],[1067,3,367,381,392,406,0],[1075,7,406,406,421,440,0],
  [1088,13,371,411,426,426,0],[1100,5,406,430,431,445,1],[1110,9,381,401,431,435,1],[1118,3,396,401,416,416,0],
  [1129,11,415,415,470,470,0],[1140,5,469,469,499,499,0],[1148,5,494,498,543,543,0],[1157,7,513,523,543,547,1],
  [1171,15,464,479,514,523,1],[1184,5,484,484,519,523,0],[1192,7,469,469,514,514,1],[1199,3,470,474,480,499,0],
  [1208,9,464,464,485,518,1],[1217,5,450,469,495,508,0],[1224,3,454,469,495,498,1],[1237,17,474,474,538,581,0],
  [1253,7,503,518,534,552,1],[1260,3,513,513,529,533,0],[1269,9,523,523,538,572,0],[1282,9,523,537,543,572,0],
  [1297,15,494,503,543,557,1],[1310,3,508,513,529,547,0],[1315,3,523,528,558,558,0],[1324,9,547,557,568,585,0],
  [1333,3,533,552,573,573,1],[1338,3,537,537,553,553,1],[1344,5,513,513,543,552,1],[1351,5,494,503,514,523,1],
  [1359,7,479,498,499,508,1],[1367,3,489,489,509,513,0],[1372,3,494,498,499,513,1],[1379,5,469,489,490,503,1],
  [1388,7,450,484,485,489,1],[1396,3,454,459,480,489,1],[1403,7,420,425,455,459,1],[1419,19,357,367,426,430,1],
  [1437,9,371,371,431,431,0],[1446,3,430,430,451,454,0],[1451,3,445,445,460,474,0],[1457,3,469,469,490,490,0],
  [1468,13,484,484,563,563,0],[1480,3,513,528,563,572,1],[1485,3,523,528,534,537,1],[1491,3,523,537,553,553,0],
  [1497,3,537,547,553,557,1],[1503,3,542,552,553,557,1],[1508,3,533,547,553,553,1],[1516,7,547,552,568,581,0],
  [1524,3,547,557,563,572,1],[1530,3,547,552,553,562,1],[1536,3,547,552,558,562,0],[1542,3,557,557,568,581,0],
  [1553,13,547,572,577,585,0],[1566,5,567,581,587,596,0],[1573,3,567,576,587,591,1],[1578,3,572,572,592,592,0],
  [1586,7,596,596,612,616,0],[1594,5,586,601,617,617,1],[1602,7,557,567,597,601,1],[1609,3,557,557,563,572,1],
  [1615,5,542,552,563,563,1],[1622,3,542,552,558,567,0],[1627,3,557,557,582,585,0],[1633,3,567,576,587,587,1],
  [1639,3,557,572,577,577,1],[1648,9,528,533,568,568,1],[1659,9,489,489,534,537,1],[1668,3,479,489,495,503,1],
  [1673,3,484,489,495,495,1],[1679,3,484,489,495,499,0],[1685,3,494,494,509,513,0],[1694,9,498,513,514,523,1],
  [1703,3,498,513,524,524,0],[1710,5,523,523,543,562,0],[1717,3,513,518,548,548,1],[1723,3,518,523,543,543,0],
  [1728,3,528,538,543,552,1],[1734,3,533,533,543,548,0],[1740,3,523,537,548,548,1],[1746,3,533,543,552,557,0],
  [1751,3,533,533,558,562,1],[1757,3,533,537,548,553,0],[1763,3,537,547,558,558,0],[1768,3,542,547,558,558,1],
  [1774,3,533,542,543,543,1],[1780,3,533,537,538,538,1],[1787,5,513,518,534,537,1],[1793,3,508,508,524,524,0],
  [1799,3,523,523,538,542,0],[1805,3,513,523,534,534,1],[1810,3,513,513,524,533,1],[1816,3,503,503,514,514,1],
  [1826,11,464,464,509,518,1],[1839,9,440,454,470,474,1],[1848,3,445,445,451,459,0],[1859,13,411,411,451,451,1],
  [1871,5,411,411,421,435,0],[1877,3,415,415,421,421,0]
];
const yesterday = [
  [62,3,1079,1079,1085,1085,0],[68,3,1084,1084,1090,1090,0],[73,3,1079,1079,1095,1095,1],[79,3,1079,1079,1085,1085,0],
  [85,3,1084,1084,1090,1090,0],[91,3,1089,1089,1090,1090,1],[96,3,1084,1084,1090,1090,0],[102,3,1085,1089,1090,1090,1],
  [108,3,1089,1089,1090,1090,1],[113,3,1089,1089,1105,1105,0],[119,3,1097,1104,1105,1105,1],[125,3,1096,1099,1105,1105,1],
  [130,3,1094,1099,1104,1104,1],[136,3,1099,1104,1115,1115,0],[142,3,1114,1114,1115,1115,1],[148,3,1105,1109,1115,1115,1],
  [153,3,1104,1104,1110,1110,1],[159,3,1099,1099,1105,1105,0],[165,3,1099,1099,1105,1105,1],[170,3,1094,1099,1104,1104,1],
  [176,3,1099,1099,1105,1105,0],[182,3,1104,1104,1110,1110,0],[187,3,1099,1099,1105,1105,1],[193,3,1094,1094,1100,1100,1],
  [199,3,1089,1094,1095,1099,1],[205,3,1094,1094,1100,1100,0],[211,3,1099,1099,1100,1100,1],[216,3,1094,1094,1100,1100,0],
  [222,3,1099,1099,1115,1115,0],[228,3,1109,1109,1115,1115,1],[233,3,1109,1109,1110,1110,1],[239,3,1109,1109,1110,1110,1],
  [245,3,1109,1109,1110,1115,1],[250,3,1094,1099,1110,1114,1],[256,3,1094,1094,1100,1100,1],[262,3,1091,1094,1099,1099,1],
  [267,3,1079,1084,1095,1095,1],[273,3,1079,1084,1085,1089,1],[279,3,1079,1084,1085,1085,1],[285,3,1079,1079,1080,1085,1],
  [290,3,1070,1070,1080,1080,1],[296,3,1074,1074,1080,1080,0],[301,3,1079,1079,1085,1085,0],[307,3,1084,1084,1085,1089,1],
  [313,3,1074,1084,1085,1085,1],[319,3,1084,1084,1085,1085,1],[325,3,1084,1084,1085,1085,1],[331,3,1084,1084,1090,1090,1],
  [336,3,1084,1084,1090,1090,1],[342,3,1080,1084,1085,1085,1],[347,3,1079,1079,1085,1085,1],[353,3,1074,1079,1085,1085,1],
  [359,3,1079,1079,1090,1090,0],[364,3,1079,1079,1085,1085,1],[370,3,1084,1084,1095,1095,0],[376,3,1094,1094,1100,1100,0],
  [382,3,1104,1104,1110,1114,0],[387,3,1107,1109,1114,1114,1],[393,3,1109,1109,1115,1115,0],[398,3,1118,1118,1124,1124,0],
  [404,3,1114,1118,1124,1127,1],[410,3,1114,1118,1119,1119,1],[415,3,1114,1114,1115,1118,1],[421,3,1118,1118,1124,1124,0],
  [427,3,1115,1118,1124,1124,0],[433,3,1118,1123,1124,1124,1],[438,3,1109,1109,1124,1124,1],[444,3,1109,1109,1115,1115,0],
  [450,3,1109,1109,1114,1118,0],[456,3,1104,1104,1110,1110,1],[461,3,1100,1104,1109,1109,1],[467,3,1104,1104,1109,1109,0],
  [473,3,1109,1109,1115,1115,0],[479,3,1109,1109,1110,1110,1],[484,3,1099,1099,1115,1115,1],[490,3,1094,1094,1099,1099,0],
  [496,3,1094,1094,1100,1100,1],[502,5,1094,1094,1109,1109,0],[509,3,1112,1114,1115,1118,1],[515,3,1109,1109,1110,1110,1],
  [521,3,1104,1104,1105,1105,1],[526,3,1094,1094,1100,1104,1],[532,3,1084,1089,1090,1090,1],[539,5,1060,1065,1085,1085,1],
  [545,3,1055,1055,1066,1070,1],[551,3,1050,1055,1056,1056,1],[557,3,1050,1055,1056,1060,1],[562,3,1055,1055,1071,1071,0],
  [568,4,1040,1040,1061,1061,1],[574,3,1045,1045,1046,1050,1],[579,3,1040,1040,1051,1051,0],[585,3,1050,1050,1051,1060,1],
  [590,3,1052,1055,1056,1056,1],[596,3,1055,1060,1061,1066,1],[602,3,1061,1061,1066,1074,0],[608,3,1055,1055,1061,1061,1],
  [614,3,1050,1059,1060,1060,1],[619,3,1055,1059,1060,1060,1],[625,3,1050,1054,1055,1059,1],[631,3,1050,1051,1056,1056,1],
  [638,7,1035,1035,1056,1056,1],[645,3,1040,1040,1041,1041,1],[657,13,996,1021,1036,1036,1],[669,3,1021,1021,1027,1027,0],
  [675,3,1030,1030,1036,1036,0],[681,3,1026,1026,1036,1036,1],[686,3,1026,1026,1027,1027,1],[692,3,1021,1026,1027,1027,1],
  [698,3,1026,1031,1046,1050,0],[703,3,1035,1045,1051,1058,0],[709,3,1045,1045,1061,1061,0],[715,3,1050,1055,1056,1060,1],
  [721,3,1050,1050,1056,1056,0],[726,3,1050,1050,1061,1061,1],[732,3,1040,1040,1051,1051,1],[737,3,1035,1035,1051,1051,0],
  [743,3,1040,1040,1041,1046,1],[749,3,1040,1040,1041,1041,1],[755,3,1021,1021,1036,1036,1],[760,3,1011,1016,1022,1031,0],
  [766,3,1016,1021,1022,1022,1],[772,3,1011,1015,1021,1021,1],[778,3,1011,1011,1020,1020,0],[783,3,1001,1001,1022,1022,1],
  [789,3,993,996,997,1006,1],[794,3,996,1001,1006,1016,0]
];
const vwap = [[900,363],[926,359],[943,354],[974,352],[983,351],[1030,351],[1056,354],[1075,355],[1088,357],[1118,358],
  [1148,363],[1171,369],[1184,370],[1192,372],[1224,375],[1237,381],[1253,382],[1282,387],[1297,391],[1315,392],[1344,397],
  [1388,401],[1403,402],[1446,401],[1468,404],[1508,407],[1530,409],[1553,413],[1602,419],[1648,423],[1685,424],[1717,427],
  [1751,429],[1787,431],[1816,432],[1848,433],[1871,432],[1877,432]];

function vwapAt(x) {
  for (let i = 1; i < vwap.length; i++) {
    const [x0, y0] = vwap[i - 1], [x1, y1] = vwap[i];
    if (x <= x1) return Math.round(y0 + (y1 - y0) * (x - x0) / (x1 - x0));
  }
}
function plus(x, y) {
  rect(x - 1, y, 3, 1, '#2962ff');
  rect(x, y - 1, 1, 3, '#2962ff');
}

// grid
for (let p = 32100; p >= 29700; p -= 100) rect(58, Math.round(yOf(p) - 0.5), 2399, 1, 'rgba(255,255,255,.055)');
line(844.5, 82, 844.5, 1329, '#5c5c26', 1, '1 3');

// volume follows the candle width
const volH = { 3: 4, 4: 6, 5: 6, 7: 7, 9: 9, 11: 12, 13: 15, 15: 17, 17: 21, 19: 27 };
[...yesterday, ...today.slice(1)].forEach(([x, w, , , , , up], i) => {
  let h = volH[w];
  if (w === 3) h = x < 800 ? 1 + (i * 7 % 5 > 2 ? 2 : 1) : 3 + i % 3;
  const bw = w + (w > 3 ? 4 : 2);
  rect(x - (bw - 1) / 2, 1329 - h, bw, h, up ? '#0d1f55' : '#232e3c');
});
rect(798, 1068, 45, 261, 'rgba(41,98,255,.33)');
rect(844, 1017, 47, 312, 'rgba(41,98,255,.33)');
add('polyline', {
  points: '58,1327 300,1326 500,1327 657,1325 700,1324 798,1325 820,1304 868,1279 1024,1272 1032,1296 1040,1318 1131,1320 1237,1322 1297,1320 1390,1323 1420,1321 1480,1321 1553,1324 1700,1323 1800,1325 1877,1323',
  fill: 'none', stroke: '#6a6526', 'stroke-width': 1, 'stroke-dasharray': '1 2'
});

for (const c of yesterday) plus(c[0], c[0] < 418 ? 1051 : 1052);
plus(820, 1047);
for (const c of today.slice(1)) plus(c[0], vwapAt(c[0]));

for (const [x, w, hi, top, bottom, lo, up] of [...yesterday, ...today]) {
  const color = up ? UP : DOWN;
  rect(x, hi, 1, lo - hi, color);
  rect(x - (w - 1) / 2, top, w, bottom - top, color);
}

// daily range boxes
rect(868, 230, 1589, 386, 'rgba(41,98,255,.04)');
rect(868, 415, 1589, 132, 'rgba(62,135,255,.1)');
rect(58, 811, 810, 464, 'rgba(41,98,255,.04)');
rect(58, 992, 810, 217, 'rgba(62,135,255,.1)');

// levels
rect(801, 991, 19, 1, '#089981');
rect(820, 990, 1637, 2, '#00bcd4');
line(58, 991.5, 2457, 991.5, '#f0b92f', 3, '3 9');
rect(58, 1108, 762, 2, '#00bcd4');
rect(58, 1208, 810, 2, '#b98c4f');
line(844, 547.5, 1880, 547.5, '#a69f4a', 1, '5 6');

add('circle', { cx: 867.5, cy: 241, r: 4, fill: '#2c6e35', stroke: '#3f9448' });
line(943, 236, 1891, 439, '#b4b7c1');
line(943, 243, 1891, 446, '#b4b7c1');

// short position and supply zone
rect(1917, 381, 210, 161, 'rgba(8,153,129,.2)');
rect(1917, 542, 210, 70, 'rgba(242,70,69,.2)');
rect(1917, 381, 210, 1, '#0b4a42');
rect(1917, 542, 210, 1, '#7c83a0');
add('rect', { x: 50, y: 585.5, width: 2225, height: 12, fill: 'rgba(255,152,0,.2)', stroke: '#f59a12' });

// fills
add('path', { d: 'M1859 392v13M1854 400l5 5 5-5', fill: 'none', stroke: '#f23645', 'stroke-width': 2 });
add('path', { d: 'M1810 552v-13M1805 544l5-5 5 5', fill: 'none', stroke: '#2962ff', 'stroke-width': 2 });

// crosshair
line(58, 521.5, 2436, 521.5, '#7d8796', 1, '5 6');
line(1199.5, 82, 1199.5, 1329, '#7d8796', 1, '5 6');

// price axis
const prices = document.getElementById('prices');
function priceLabel(text, y, cls) {
  const s = document.createElement('span');
  s.textContent = text;
  s.className = cls || '';
  s.style.top = pctY(y);
  prices.appendChild(s);
}
for (let p = 32100; p >= 29700; p -= 100) priceLabel(p.toLocaleString('en-US'), yOf(p));
priceLabel('31,445', 433, 'blue');
priceLabel('00:13', 421, 'yellow timer');
priceLabel('31,260', 522, 'slate');
priceLabel('31,100', 602, 'yellow');
priceLabel('31,010', 646, 'grey');
priceLabel('30,610', 841, 'cyan');
priceLabel('30,490', 900, 'green');
priceLabel('30,300', 992, 'amber');
priceLabel('9.97 K', 1323, 'yellow ma');

// time axis
const times = document.getElementById('times');
const ticks = [['14:55',96],['14:57',142],['15:00',210],['15:02',256],['15:05',324],['15:07',370],['15:10',438],['15:12',484],
  ['15:15',556],['15:17',602],['15:20',686],['15:22',732],['19',868],['09:05',995],['09:07',1088],['09:12',1297],['09:15',1388],
  ['09:17',1468],['09:20',1553],['09:22',1615],['09:25',1703],['09:27',1751],['09:30',1826],['09:32',1897],['09:35',1977],
  ['09:37',2031],['09:40',2112],['09:42',2165],['09:45',2246],['09:47',2299],['09:50',2381],['09:52',2434],
  ['6月 19 (金)   09:09:45', 1200, 'cursor']];
for (const [text, x, cls] of ticks) {
  const s = document.createElement('span');
  s.textContent = text;
  s.className = cls || '';
  s.style.left = pctX(x);
  times.appendChild(s);
}

// notes over the plot
const notes = document.getElementById('notes');
function note(html, x, y, cls) {
  const s = document.createElement('span');
  s.innerHTML = html;
  s.className = cls || '';
  if (x) s.style.left = pctX(x);
  s.style.top = pctY(y);
  notes.appendChild(s);
}
note('100 @ 31410', 1859, 378);
note('100 @ 31260', 1810, 568);
note('1530', 820, 1104, 'small');
note('op', 868, 1205, 'small open');
note('VWAP', 0, 433, 'tag');
note('Volume MA', 0, 1323, 'tag ma');
note('<svg class="ico"><use href="#i-pluscircle"/></svg>', 0, 522, 'tag add-alert');
```
